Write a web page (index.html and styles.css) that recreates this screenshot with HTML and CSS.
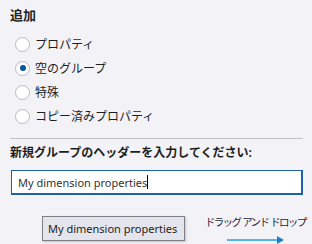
FILE: index.html
```html
<!DOCTYPE html>
<html lang="ja">
<head>
    <meta charset="UTF-8" />
    <title>追加</title>
    <link rel="stylesheet" href="styles.css">
</head>
<body>
    <div class="title">追加</div>

    <div class="options">
        <label class="option"><span class="radio"></span>プロパティ</label>
        <label class="option"><span class="radio checked"></span>空のグループ</label>
        <label class="option"><span class="radio"></span>特殊</label>
        <label class="option"><span class="radio"></span>コピー済みプロパティ</label>
    </div>

    <hr class="sep" />

    <div class="prompt">新規グループのヘッダーを入力してください:</div>
    <div class="input">My dimension properties<span class="caret"></span></div>

    <div class="drag-row">
        <div class="tile">My dimension properties</div>
        <div class="dnd">
            <span class="dnd-text">ドラッグ アンド ドロップ</span>
            <svg class="arrow" width="58" height="8" viewBox="0 0 58 8">
                <line x1="0" y1="4" x2="51" y2="4" stroke="#52b6e4" stroke-width="2" />
                <polygon points="50,0 57,4 50,8" fill="#1f7fc7" />
            </svg>
        </div>
    </div>
</body>
</html>
```

FILE: styles.css
```css
body {
    margin: 0;
    height: 244px;
    padding: 6px 9px 0 10px;
    box-sizing: border-box;
    background: #f2f2f7;
    color: #1e1e1e;
    font-family: 'Noto Sans', 'Noto Sans CJK JP', sans-serif;
    font-size: 12px;
    overflow: hidden;
}

.title {
    font-weight: 600;
    font-size: 13px;
    line-height: 18px;
}

.options {
    margin-top: 8px;
}

.option {
    display: flex;
    align-items: center;
    height: 24px;
    gap: 5px;
    padding-left: 5px;
}

.radio {
    width: 15px;
    height: 15px;
    border: 1px solid #b9b9c0;
    border-radius: 50%;
    background: #fff;
    box-sizing: border-box;
    display: flex;
    align-items: center;
    justify-content: center;
}

.radio.checked::after {
    content: '';
    width: 6px;
    height: 6px;
    border-radius: 50%;
    background: #005a9e;
}

.sep {
    border: none;
    border-top: 1px solid #c2c2c8;
    margin: 10px 0 0 0;
}

.prompt {
    font-weight: 600;
    margin-top: 5px;
    line-height: 18px;
}

.input {
    margin-top: 8px;
    height: 25px;
    border: 2px solid #1c62a8;
    border-width: 1px 2px 2px 1px;
    background: #fff;
    box-sizing: border-box;
    padding-left: 6px;
    display: flex;
    align-items: center;
    font-size: 11px;
    color: #333;
    margin-left: 1px;
    white-space: nowrap;
}

.caret {
    display: inline-block;
    width: 1px;
    height: 14px;
    background: #000;
}

.drag-row {
    display: flex;
    margin-top: 21px;
}

.tile {
    margin-left: 32px;
    width: 143px;
    height: 25px;
    flex-shrink: 0;
    box-sizing: border-box;
    border: 1px solid #7e7e86;
    background: #e4e4ec;
    box-shadow: 1px 1px 2px rgba(0, 0, 0, 0.2);
    display: flex;
    align-items: center;
    padding-left: 5px;
    font-size: 11px;
    white-space: nowrap;
}

.dnd {
    margin-left: 20px;
    margin-top: -2px;
    display: flex;
    flex-direction: column;
    align-items: flex-start;
    white-space: nowrap;
}

.dnd-text {
    font-size: 10.5px;
    letter-spacing: -1.7px;
    word-spacing: 1px;
    color: #2a1f3a;
    line-height: 16px;
}

.arrow {
    margin-top: 6px;
    margin-left: 22px;
}
```
